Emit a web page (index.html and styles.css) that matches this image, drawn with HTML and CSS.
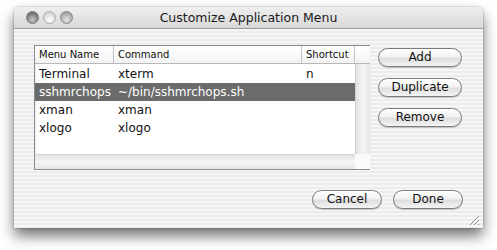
FILE: index.html
```html
<!DOCTYPE html>
<html>
<head>
<meta charset="utf-8">
<link rel="stylesheet" href="styles.css">
</head>
<body>
<div class="window">
  <div class="titlebar">
    <div class="lights">
      <span class="light close"></span>
      <span class="light min"></span>
      <span class="light zoom"></span>
    </div>
    <div class="title">Customize Application Menu</div>
  </div>
  <div class="content">
    <div class="top">
      <div class="list">
        <div class="head">
          <div class="hc c1">Menu Name</div>
          <div class="hc c2">Command</div>
          <div class="hc c3">Shortcut</div>
          <div class="hc c4"></div>
        </div>
        <div class="rows">
          <div class="row"><span>Terminal</span><span>xterm</span><span>n</span></div>
          <div class="row sel"><span>sshmrchops</span><span>~/bin/sshmrchops.sh</span><span></span></div>
          <div class="row"><span>xman</span><span>xman</span><span></span></div>
          <div class="row"><span>xlogo</span><span>xlogo</span><span></span></div>
        </div>
        <div class="vscroll"></div>
        <div class="hscroll"></div>
        <div class="corner"></div>
      </div>
      <div class="side">
        <button class="btn">Add</button>
        <button class="btn">Duplicate</button>
        <button class="btn">Remove</button>
      </div>
    </div>
    <div class="bottom">
      <button class="btn small">Cancel</button>
      <button class="btn small">Done</button>
    </div>
    <svg class="grip" width="12" height="12" viewBox="0 0 12 12">
      <path d="M11 2 L2 11 M11 6 L6 11 M11 10 L10 11" stroke="#8a8a8a" stroke-width="1"/>
      <path d="M12 3 L3 12 M12 7 L7 12" stroke="#ffffff" stroke-width="1"/>
    </svg>
  </div>
</div>
</body>
</html>
```

FILE: styles.css
```css
html, body {
  margin: 0;
  padding: 0;
  background: #ffffff;
}
body {
  width: 497px;
  height: 250px;
  overflow: hidden;
  font-family: "DejaVu Sans", "Liberation Sans", sans-serif;
  color: #111;
}
.window {
  margin: 7px 0 0 14px;
  width: 469px;
  height: 221px;
  border-radius: 5px 5px 0 0;
  background: repeating-linear-gradient(#ececec 0 2px, #f6f6f6 2px 4px);
  box-shadow: 0 8px 14px rgba(0,0,0,0.55), 0 0 2px rgba(0,0,0,0.4);
  display: flex;
  flex-direction: column;
  position: relative;
}
.titlebar {
  height: 21px;
  border-radius: 5px 5px 0 0;
  background: linear-gradient(#efefef, #d8d8d8);
  border-bottom: 1px solid #9a9a9a;
  display: flex;
  align-items: center;
  position: relative;
}
.lights {
  display: flex;
  gap: 4px;
  margin-left: 12px;
}
.light {
  width: 13px;
  height: 13px;
  border-radius: 50%;
  border: 1px solid #7a7a7a;
  box-sizing: border-box;
}
.light.close { background: radial-gradient(circle at 50% 70%, #c8c8c8, #6e6e6e 75%); }
.light.min { background: radial-gradient(circle at 50% 70%, #ffffff, #d2d2d2 80%); border-color: #aaa; }
.light.zoom { background: radial-gradient(circle at 50% 70%, #e8e8e8, #9a9a9a 80%); border-color: #8a8a8a; }
.title {
  position: absolute;
  left: 0;
  right: 0;
  text-align: center;
  font-size: 12.5px;
  color: #1a1a1a;
}
.content {
  padding: 16px 20px 0 20px;
  display: flex;
  flex-direction: column;
}
.top {
  display: flex;
  align-items: flex-start;
}
.list {
  width: 336px;
  height: 125px;
  box-sizing: border-box;
  border: 1px solid #8c8c8c;
  box-shadow: inset 0 1px 2px rgba(0,0,0,0.25);
  background: #fff;
  display: grid;
  grid-template-columns: 1fr 15px;
  grid-template-rows: 18px 1fr 15px;
}
.head {
  grid-column: 1 / 3;
  display: flex;
  border-bottom: 1px solid #b8b8b8;
  background: linear-gradient(#ffffff, #f3f3f3);
  font-size: 10px;
}
.hc {
  box-sizing: border-box;
  padding-left: 4px;
  line-height: 17px;
  border-right: 1px solid #c4c4c4;
}
.c1 { width: 79px; }
.c2 { width: 188px; }
.c3 { width: 53px; }
.c4 { flex: 1; border-right: none; }
.rows {
  padding-top: 1px;
  font-size: 12px;
}
.row {
  display: grid;
  grid-template-columns: 79px 188px 53px;
  height: 18px;
  line-height: 18px;
}
.row span {
  padding-left: 4px;
  white-space: nowrap;
}
.row.sel {
  background: #6b6b6b;
  color: #fff;
}
.vscroll {
  background: linear-gradient(90deg, #e2e2e2, #f4f4f4 50%, #e6e6e6);
  border-left: 1px solid #d0d0d0;
}
.hscroll {
  background: linear-gradient(#e4e4e4, #f5f5f5 50%, #e6e6e6);
  border-top: 1px solid #d0d0d0;
}
.corner {
  background: #fafafa;
}
.side {
  margin-left: 8px;
  margin-top: 3px;
  display: flex;
  flex-direction: column;
  gap: 11px;
}
.btn {
  width: 84px;
  height: 19px;
  padding: 0;
  border: 1px solid #7c7c7c;
  border-radius: 10px;
  background: linear-gradient(#ffffff 0%, #f2f2f2 45%, #dedede 55%, #f4f4f4 100%);
  box-shadow: 0 1px 1px rgba(0,0,0,0.2);
  font-family: "DejaVu Sans", "Liberation Sans", sans-serif;
  font-size: 12px;
  color: #111;
  line-height: 17px;
}
.btn.small { width: 70px; }
.bottom {
  margin-top: 20px;
  display: flex;
  justify-content: flex-end;
  gap: 11px;
}
.grip {
  position: absolute;
  right: 3px;
  bottom: 2px;
}
```
